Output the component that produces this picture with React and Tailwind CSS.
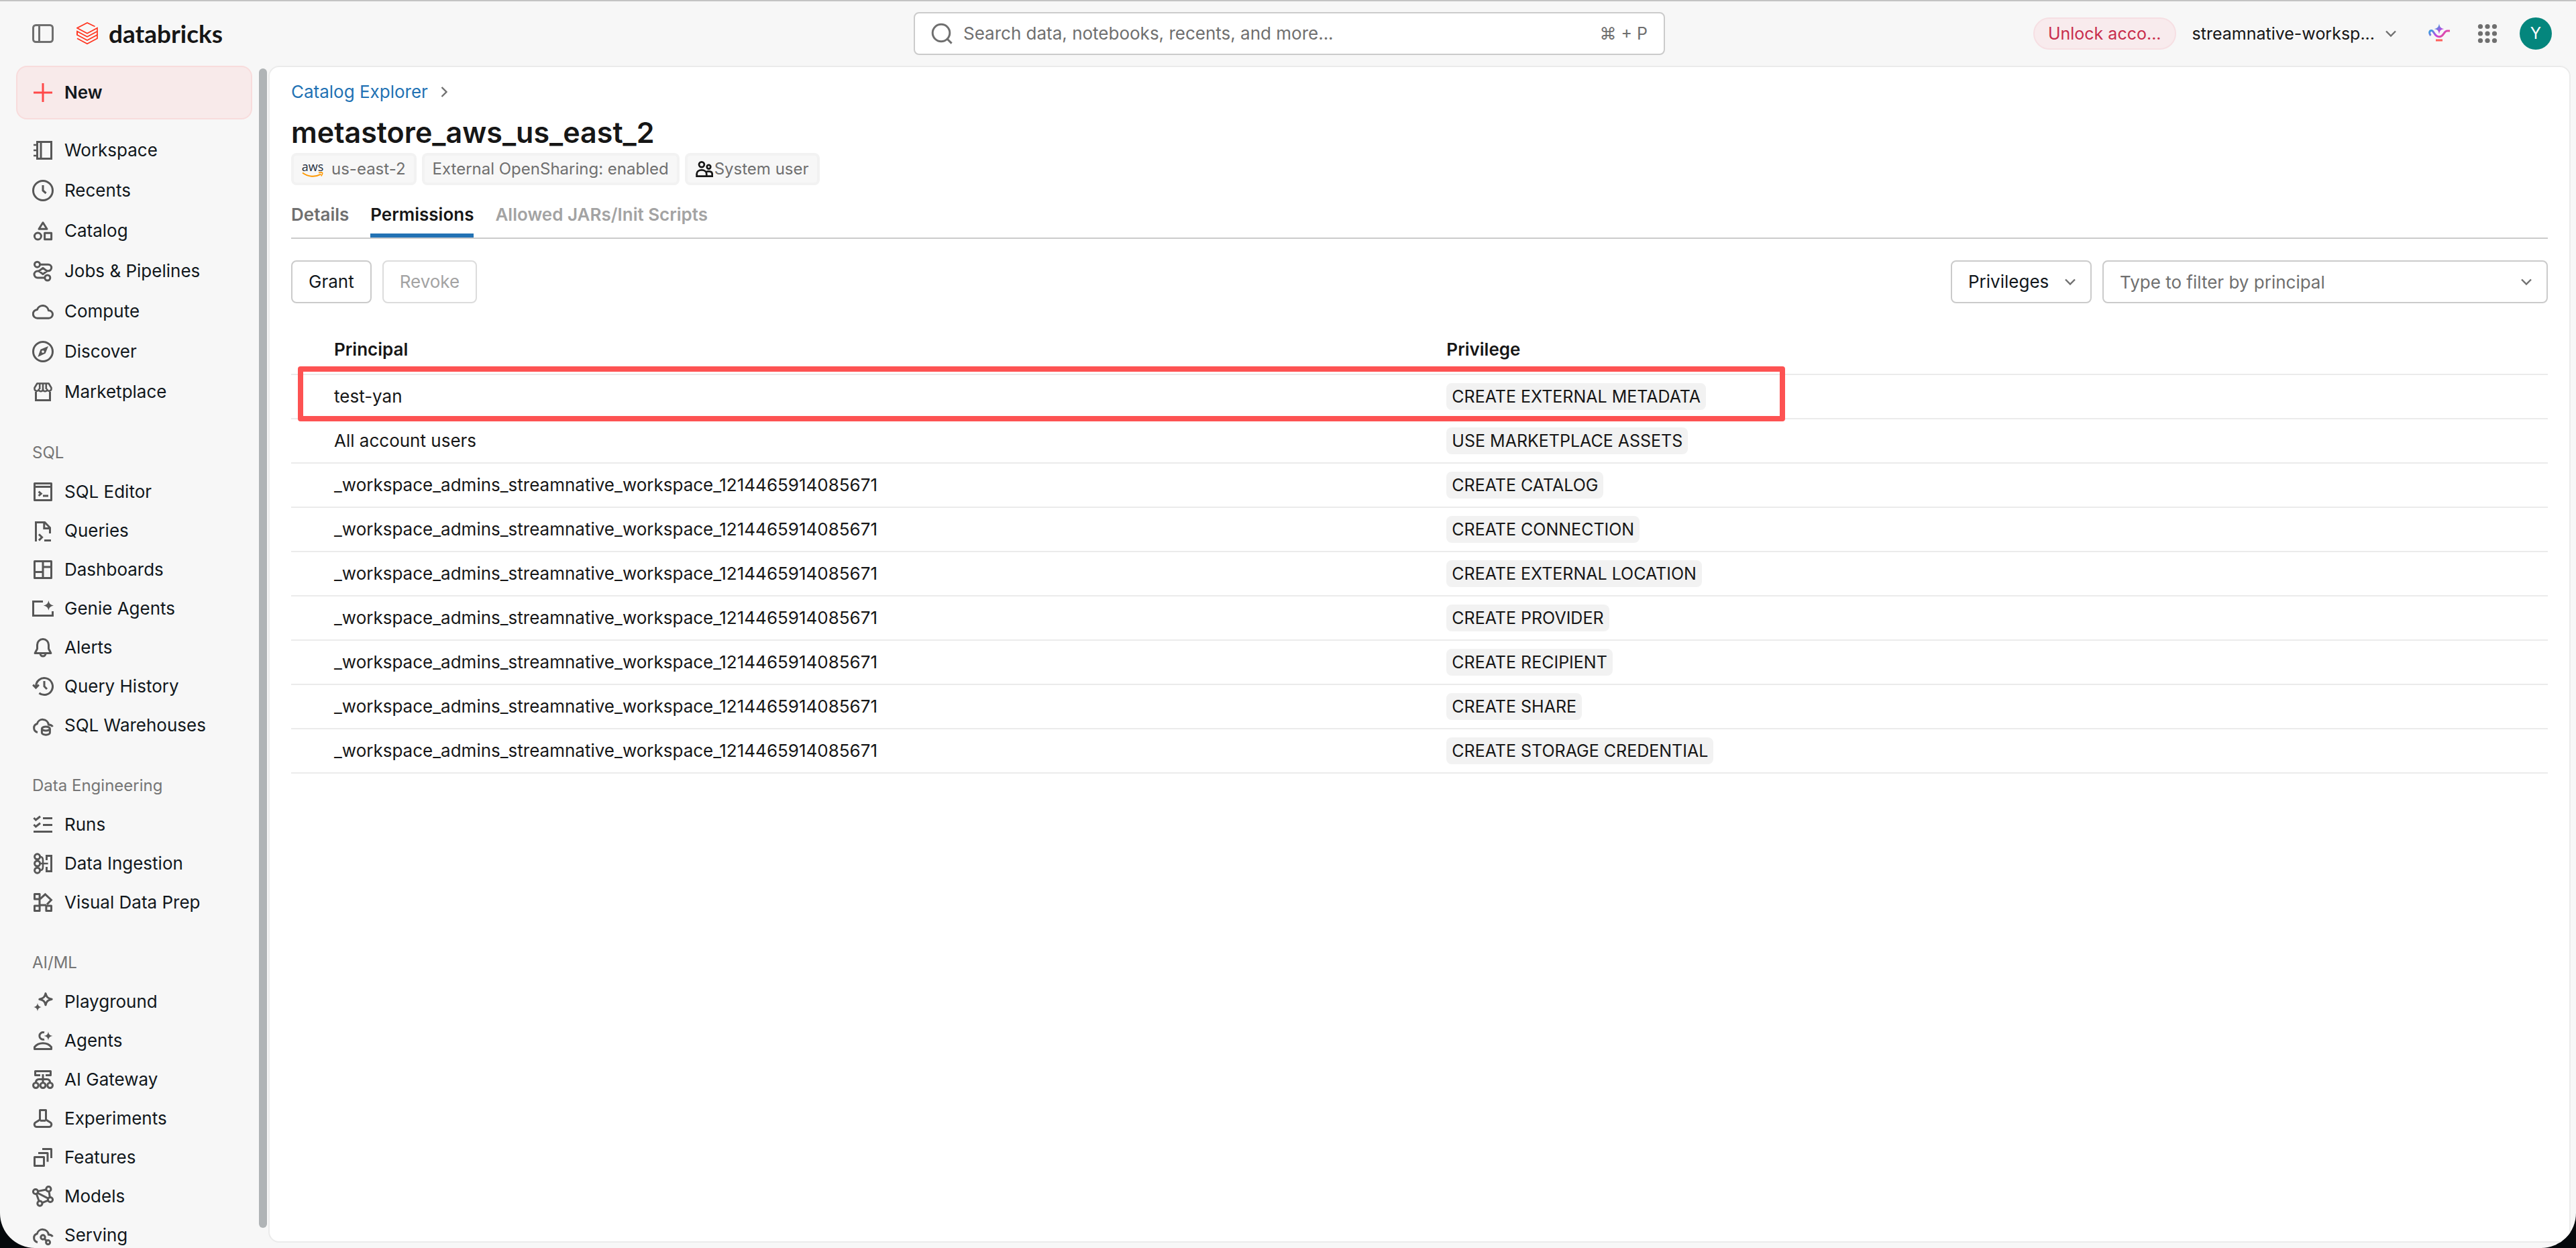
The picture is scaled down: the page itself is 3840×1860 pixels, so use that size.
const Icon = ({ children, className = "size-8 text-[#575757]" }) => (
    <svg viewBox="0 0 16 16" fill="none" stroke="currentColor" strokeWidth="1.5" className={`shrink-0 ${className}`} aria-hidden="true">
        {children}
    </svg>
)

const icons = {
    workspace: (
        <>
            <path d="M3.75 1.75h10.5v12.5H3.75zM6.5 1.75v12.5" />
            <path d="M1 4h2.5M1 8h2.5M1 12h2.5" strokeWidth="1.3" />
        </>
    ),
    recents: (
        <>
            <circle cx="8" cy="8" r="7.25" />
            <path d="M8 4v4l2.3 2" />
        </>
    ),
    catalog: (
        <>
            <path d="M8 1.9 11 6.6H5z" strokeLinejoin="round" />
            <circle cx="4.2" cy="12" r="2.5" />
            <path d="M9.3 9.6h5v4.8h-5z" strokeLinejoin="round" />
        </>
    ),
    jobs: (
        <>
            <circle cx="3.75" cy="3.1" r="2" />
            <circle cx="11.4" cy="13" r="2" />
            <path d="M5.75 3.1h6.2a2.35 2.35 0 0 1 0 4.8H11M9.4 13H4a2.4 2.4 0 0 1 0-5h1" />
            <path d="m5 8 3-2.3L11 8l-3 2.3z" strokeLinejoin="round" />
        </>
    ),
    compute: <path d="M3.9 13.1a3.15 3.15 0 0 1-.2-6.3 4.4 4.4 0 0 1 8.5.6h.2a2.85 2.85 0 0 1 0 5.7z" strokeLinejoin="round" />,
    discover: (
        <>
            <circle cx="8" cy="8" r="7.25" />
            <path d="M12 4 9.8 9.4 4.2 12l2-5.6zM8 7.1a.95.95 0 1 0 0 1.9.95.95 0 0 0 0-1.9z" fill="currentColor" fillRule="evenodd" stroke="none" />
        </>
    ),
    marketplace: (
        <>
            <path d="M2.75 8v6.25h10.5V8" />
            <path d="M3.7 1.75h8.6L14.25 5v.7a1.6 1.6 0 0 1-3.1.6 1.6 1.6 0 0 1-3.15 0 1.6 1.6 0 0 1-3.15 0 1.6 1.6 0 0 1-3.1-.6V5zM5.6 2v4M8 2v4M10.4 2v4" strokeLinejoin="round" strokeWidth="1.3" />
        </>
    ),
    sqlEditor: (
        <>
            <path d="M1.75 1.75h12.5v12.5H1.75zM1.75 4.3h12.5" strokeLinejoin="round" />
            <path d="m4.8 7.8 1.8 1.6L4.8 11M8 11h4" />
        </>
    ),
    queries: (
        <>
            <path d="M2.75 16V1.75h6.6l3.9 4V10M8.9 2v4.2H13" />
            <path d="m5 10.6 2.3 2.3L5 15.2M9 15.25h5" />
        </>
    ),
    dashboards: <path d="M1.75 1.75h12.5v12.5H1.75zM8 2v12M2 9.75h6M8 6h6" strokeLinejoin="round" />,
    genie: (
        <>
            <path d="M8 2.75H.75v10.5h14.5V10" />
            <path d="M12.2 2c.5 2.3 1.3 3.1 3.8 3.7-2.5.6-3.3 1.4-3.8 3.7-.5-2.3-1.3-3.1-3.8-3.7 2.5-.6 3.3-1.4 3.8-3.7z" fill="currentColor" stroke="none" />
        </>
    ),
    alerts: (
        <>
            <path d="M3.75 6a4.25 4.25 0 0 1 8.5 0v3l1.7 3.25H2.05L3.75 9z" strokeLinejoin="round" />
            <path d="M6 12.5a2 2 0 0 0 4 0" />
        </>
    ),
    history: (
        <>
            <path d="M2.75 8A6.25 6.25 0 1 1 5.2 13" />
            <path d="m.6 6.8 2.15 2.2L4.9 6.8M9 4v4l2 2" />
        </>
    ),
    warehouses: (
        <>
            <path d="M4 13.2a3.25 3.25 0 0 1-.4-6.3 4.4 4.4 0 0 1 8.6.6c1.3.1 2.4.5 3.1 1.5" />
            <ellipse cx="10.2" cy="10.5" rx="3" ry="1.5" />
            <path d="M7.2 10.5v3c0 .9 1.3 1.6 3 1.6s3-.7 3-1.6v-3" />
        </>
    ),
    runs: <path d="m1.2 3 1.5 1.5L6 1.9M1.2 8l1.5 1.5L6 6.9M8 3.25h7M8 8.25h7M1 13.25h14" />,
    ingestion: (
        <>
            <circle cx="3.8" cy="2.9" r="2" />
            <circle cx="3.8" cy="8" r="2" />
            <circle cx="3.8" cy="13.1" r="2" />
            <path d="M5.8 2.9C7.5 2.9 8 3.9 8 5.5v5c0 1.6-.5 2.6-2.2 2.6M5.8 8h6" strokeWidth="1.3" />
            <path d="M10.75 5.5V2.25h3.5v11.5h-3.5V10.5" />
        </>
    ),
    visualPrep: (
        <>
            <path d="M1.75 1.75h3.8v3.8h-3.8zM1.75 10.45h3.8v3.8h-3.8zM10.45 10.45h3.8v3.8h-3.8z" strokeLinejoin="round" />
            <path d="M5.5 10V5.5M5.5 10h5M6 5.3l3.7-3.4 4.5 4.2L11 9.5" />
        </>
    ),
    playground: (
        <>
            <path d="M10 1.8c.6 2.7 1.7 3.7 4.6 4.3-2.9.6-4 1.6-4.6 4.3-.6-2.7-1.7-3.7-4.6-4.3 2.9-.6 4-1.6 4.6-4.3z" strokeLinejoin="round" />
            <path d="M4 9c.4 1.9 1 2.6 3 3-2 .4-2.6 1.1-3 3-.4-1.9-1-2.6-3-3 2-.4 2.6-1.1 3-3z" fill="currentColor" stroke="none" />
        </>
    ),
    agents: (
        <>
            <path d="M9 1.9A2.7 2.7 0 1 0 9 7" />
            <path d="M12 1.3c.4 2.1 1.1 2.8 3.2 3.2-2.1.4-2.8 1.1-3.2 3.2-.4-2.1-1.1-2.8-3.2-3.2 2.1-.4 2.8-1.1 3.2-3.2z" fill="currentColor" stroke="none" />
            <path d="M1.75 14.25v-1.5C3.25 10.850 5.450 9.850 8 9.850s4.750 1 6.250 2.900v1.500z" strokeLinejoin="round" />
        </>
    ),
    gateway: (
        <>
            <path d="M6 4.75H2.25v-3h11.5v3H10" strokeLinejoin="round" />
            <path d="M8 4v6M2.75 10.3C2.75 8.5 3.5 7.75 5 7.75h6c1.5 0 2.25.75 2.25 2.55" />
            <circle cx="2.7" cy="12.3" r="1.95" />
            <circle cx="8" cy="12.3" r="1.95" />
            <circle cx="13.3" cy="12.3" r="1.95" />
        </>
    ),
    experiments: <path d="M5.75 1.75h4.5v7.2l3.2 1.9c1.5.9 1.1 3.4-.9 3.4h-9.1c-2 0-2.4-2.5-.9-3.4l3.2-1.9zM6 9.6h4" strokeLinejoin="round" />,
    features: <path d="M1.75 7.75h7v6.5h-7zM4.5 4.75h7v6.5M7.5 1.75h6.75V8.5" strokeLinejoin="round" />,
    models: (
        <>
            <circle cx="2.5" cy="4.5" r="1.8" />
            <circle cx="12.2" cy="2.6" r="1.8" />
            <circle cx="13.5" cy="10.5" r="1.8" />
            <circle cx="5.7" cy="13.3" r="1.8" />
            <path d="m4.3 4.2 6.1-1.2M12.5 4.4l.7 4.3M4 5.5l7.9 4.1M3.2 6.2l1.9 5.4M7.4 12.8l4.4-1.7" />
        </>
    ),
    serving: (
        <>
            <path d="M4 13.2a3.25 3.25 0 0 1-.4-6.3 4.4 4.4 0 0 1 8.6.6c1.3.1 2.4.5 3.1 1.5" />
            <circle cx="8" cy="9.5" r="1.6" />
            <circle cx="11.8" cy="13.3" r="1.5" />
            <path d="m9.2 10.7 1.5 1.5" />
        </>
    ),
}

const primaryItems = [
    ["Workspace", "workspace"],
    ["Recents", "recents"],
    ["Catalog", "catalog"],
    ["Jobs & Pipelines", "jobs"],
    ["Compute", "compute"],
    ["Discover", "discover"],
    ["Marketplace", "marketplace"],
]

const sections = [
    {
        title: "SQL",
        items: [
            ["SQL Editor", "sqlEditor"],
            ["Queries", "queries"],
            ["Dashboards", "dashboards"],
            ["Genie Agents", "genie"],
            ["Alerts", "alerts"],
            ["Query History", "history"],
            ["SQL Warehouses", "warehouses"],
        ],
    },
    {
        title: "Data Engineering",
        items: [
            ["Runs", "runs"],
            ["Data Ingestion", "ingestion"],
            ["Visual Data Prep", "visualPrep"],
        ],
    },
    {
        title: "AI/ML",
        items: [
            ["Playground", "playground"],
            ["Agents", "agents"],
            ["AI Gateway", "gateway"],
            ["Experiments", "experiments"],
            ["Features", "features"],
            ["Models", "models"],
            ["Serving", "serving"],
        ],
    },
]

const ADMINS = "_workspace_admins_streamnative_workspace_1214465914085671"

const grants = [
    ["test-yan", "CREATE EXTERNAL METADATA"],
    ["All account users", "USE MARKETPLACE ASSETS"],
    [ADMINS, "CREATE CATALOG"],
    [ADMINS, "CREATE CONNECTION"],
    [ADMINS, "CREATE EXTERNAL LOCATION"],
    [ADMINS, "CREATE PROVIDER"],
    [ADMINS, "CREATE RECIPIENT"],
    [ADMINS, "CREATE SHARE"],
    [ADMINS, "CREATE STORAGE CREDENTIAL"],
]

const ChevronDown = ({ className = "" }) => (
    <svg viewBox="0 0 16 16" fill="none" stroke="currentColor" strokeWidth="2.4" className={`size-4 shrink-0 text-[#6f6f6f] ${className}`} aria-hidden="true">
        <path d="M1 4.500 8 11.500l7-7" />
    </svg>
)

const Logo = () => (
    <a href="#" className="flex items-center gap-4 text-[#161616]">
        <svg viewBox="0 0 32 34" fill="none" stroke="#ff3621" strokeWidth="1.7" className="h-[34px] w-8" aria-hidden="true">
            <path d="M27.5 6.5 16 1 1 8.7l15 8 15-8v5l-15 8-15-8v5.3l15 8 15-8v5.3l-15 8-15-8" />
            <path d="M1 14v5.5M31 14v5" />
        </svg>
        <span className="font-[Lato] text-[37px] leading-9 font-bold">databricks</span>
    </a>
)

const GenieIcon = () => (
    <svg viewBox="0 0 16 16" fill="none" className="size-8" aria-hidden="true">
        <defs>
            <linearGradient id="genie" x1="1" y1="2" x2="13" y2="15" gradientUnits="userSpaceOnUse">
                <stop offset="0.2" stopColor="#4299e0" />
                <stop offset="0.5" stopColor="#ca42e0" />
                <stop offset="1" stopColor="#ff5f46" />
            </linearGradient>
        </defs>
        <path d="M8 .6c.5 2.600 1.200 3.400 3.700 3.900C9.200 5 8.500 5.800 8 8.400 7.500 5.800 6.800 5 4.300 4.500 6.800 4 7.500 3.200 8 .6z" fill="url(#genie)" />
        <path d="M1.700 9.500C.2 7.500.8 5.800 2.300 5.800c2 0 1.900 4.600 5.700 4.600 3.700 0 3.300-4.400 6-4.400h2" stroke="url(#genie)" strokeWidth="1.5" />
        <path d="M5.500 13h5" stroke="#ff5f5a" strokeWidth="1.5" />
    </svg>
)

const Header = () => (
    <header className="flex h-24 shrink-0 items-center gap-8 pr-9 pl-10">
        <div className="flex flex-1 items-center gap-[34px]">
            <button aria-label="Toggle sidebar" className="ml-2">
                <Icon className="size-8 text-[#6f6f6f]">
                    <rect x="0.75" y="1.75" width="14.5" height="12.5" rx="2" />
                    <path d="M5.25 2v12" />
                </Icon>
            </button>
            <Logo />
        </div>

        <label className="flex h-16 w-full max-w-[1120px] items-center gap-4 rounded-lg border-2 border-[#cbcbcb] bg-white px-6 text-[#6f6f6f]">
            <svg viewBox="0 0 16 16" fill="none" stroke="currentColor" strokeWidth="1.5" className="size-8 shrink-0" aria-hidden="true">
                <circle cx="7.5" cy="7.5" r="6.4" />
                <path d="m12 12 3.3 3.3" />
            </svg>
            <input
                type="search"
                aria-label="Search"
                placeholder="Search data, notebooks, recents, and more..."
                className="min-w-0 flex-1 bg-transparent placeholder:text-[#6f6f6f] outline-none"
            />
            <span className="text-[25px]">⌘ + P</span>
        </label>

        <div className="flex flex-1 items-center justify-end text-[25px]">
            <button className="h-12 rounded-full border-2 border-[#f6dfe3] bg-[#f8ebed] px-5 text-[#c82d4c]">Unlock acco...</button>
            <button className="ml-6 flex items-center gap-4 text-[#161616]">
                streamnative-worksp...
                <ChevronDown />
            </button>
            <button aria-label="Genie" className="ml-12">
                <GenieIcon />
            </button>
            <button aria-label="Apps" className="ml-10">
                <svg viewBox="0 0 32 32" className="size-8 fill-[#6f6f6f]" aria-hidden="true">
                    {[5.5, 16, 26.5].map((cy) => [5.5, 16, 26.5].map((cx) => <circle key={`${cx}-${cy}`} cx={cx} cy={cy} r="3.6" />))}
                </svg>
            </button>
            <button className="ml-8 size-12 rounded-full bg-[#04867d] text-2xl text-white">Y</button>
        </div>
    </header>
)

const NavItem = ({ label, icon, className }) => (
    <li>
        <a href="#" className={`flex items-center gap-4 px-6 text-[#11171c] ${className}`}>
            <Icon>{icons[icon]}</Icon>
            {label}
        </a>
    </li>
)

const Sidebar = () => (
    <aside className="flex w-[400px] shrink-0 overflow-hidden">
        <nav className="flex-1 pr-[10px] pl-6">
            <button className="flex h-20 w-full items-center gap-4 rounded-2xl border-2 border-[#f8dcdc] bg-[#f8eaea] px-[22px] font-semibold text-[#11171c]">
                <Icon className="size-8 text-[#ff4949]">
                    <path d="M8 1v14M1 8h14" />
                </Icon>
                New
            </button>
            <ul className="pt-4">
                {primaryItems.map(([label, icon]) => (
                    <NavItem key={label} label={label} icon={icon} className="h-[60px]" />
                ))}
            </ul>
            {sections.map((section) => (
                <section key={section.title} className="pt-8">
                    <h2 className="px-6 text-2xl leading-[58px] text-[#757575]">{section.title}</h2>
                    <ul>
                        {section.items.map(([label, icon]) => (
                            <NavItem key={label} label={label} icon={icon} className="h-[58px]" />
                        ))}
                    </ul>
                </section>
            ))}
        </nav>
        {/* scrollbar thumb */}
        <div className="mt-1 mr-[2px] mb-[30px] w-3 rounded-full bg-[#b0b4b6]" />
    </aside>
)

const Tag = ({ children }) => (
    <li className="flex h-12 items-center rounded-lg border-4 border-[#f2f2f2] bg-[#f7f7f7] px-3 text-2xl text-[#6f6f6f]">{children}</li>
)

const AwsMark = () => (
    <span className="mr-3 flex w-8 flex-col items-center font-[Open_Sans] text-lg leading-4 font-medium text-[#252f3e]">
        aws
        <svg viewBox="0 0 32 9" fill="none" stroke="#ff9900" strokeWidth="2" className="h-[9px] w-8" aria-hidden="true">
            <path d="M1 1.5c8 6 18.5 7 27.5 2.2" />
            <path d="M25 1.5c3-.8 5-.6 5.5 0s-.2 2.8-1.7 5" strokeWidth="1.6" />
        </svg>
    </span>
)

const Toolbar = () => (
    <div className="mt-8 flex items-center gap-4">
        <button className="h-16 rounded-lg border-2 border-[#cbcbcb] px-6 text-[#11171c]">Grant</button>
        <button disabled className="h-16 rounded-lg border-2 border-[#dcdcdc] px-6 text-[#a3a3a3]">
            Revoke
        </button>
        <div className="relative ml-auto">
            <select aria-label="Privileges" className="h-16 w-[210px] appearance-none rounded-lg border-2 border-[#cbcbcb] pl-6 text-[#11171c]">
                <option>Privileges</option>
            </select>
            <ChevronDown className="pointer-events-none absolute top-6 right-6" />
        </div>
        <div className="relative">
            <input
                role="combobox"
                aria-expanded="false"
                aria-label="Filter by principal"
                placeholder="Type to filter by principal"
                className="h-16 w-[664px] rounded-lg border-2 border-[#cbcbcb] pr-14 pl-6 placeholder:text-[#6f6f6f]"
            />
            <ChevronDown className="pointer-events-none absolute top-6 right-6" />
        </div>
    </div>
)

const GrantsTable = () => (
    <div className="relative mt-8">
        <table className="w-full table-fixed text-left text-[#161616]">
            <thead>
                <tr className="h-[74px] border-b-2 border-[#ebebeb]">
                    <th className="w-[51.2%] pl-16 font-semibold">Principal</th>
                    <th className="font-semibold">Privilege</th>
                </tr>
            </thead>
            <tbody>
                {grants.map(([principal, privilege]) => (
                    <tr key={privilege} className="h-[66px] border-b-2 border-[#ebebeb]">
                        <td className="pl-16">{principal}</td>
                        <td>
                            <span className="inline-block rounded-lg bg-[#f2f2f2] px-2 align-middle text-[25px] leading-10">{privilege}</span>
                        </td>
                    </tr>
                ))}
            </tbody>
        </table>
        {/* highlight around the first grant */}
        <div className="pointer-events-none absolute top-[62px] left-[10px] h-[82px] w-[65.9%] rounded border-8 border-[#fd5252]" />
    </div>
)

const App = () => {
    return (
        <div className="bg-[#05090c]">
            <div className="flex h-screen flex-col overflow-hidden rounded-b-[52px] border-t-2 border-[#c4c4c4] bg-[#f7f7f7] font-[Inter,sans-serif] text-[26px] leading-8">
                <Header />
                <div className="flex min-h-0 flex-1">
                    <Sidebar />
                    <main className="mr-2 mb-2 min-w-0 flex-1 rounded-2xl border-2 border-[#ebebeb] bg-white px-8 pt-[21px]">
                        <nav aria-label="Breadcrumb" className="flex items-center gap-4">
                            <a href="#" className="text-[#2272b4]">
                                Catalog Explorer
                            </a>
                            <ChevronDown className="-rotate-90" />
                        </nav>
                        <h1 className="mt-4 text-[43px] leading-[56px] font-semibold text-[#161616]">metastore_aws_us_east_2</h1>
                        <ul className="mt-[3px] flex gap-2">
                            <Tag>
                                <AwsMark />
                                us-east-2
                            </Tag>
                            <Tag>External OpenSharing: enabled</Tag>
                            <Tag>
                                <svg viewBox="0 0 16 16" fill="none" stroke="#161616" strokeWidth="1.7" className="mr-[2px] size-[26px]" aria-hidden="true">
                                    <circle cx="5.5" cy="3.8" r="2.4" />
                                    <circle cx="12" cy="6" r="1.7" />
                                    <path d="M1 14.5v-2c0-2.2 2-3.7 4.5-3.7s4.5 1.5 4.5 3.7v2zM10 14.5h5.2v-1.8c0-1.6-1.2-2.6-3.2-2.6-1 0-1.800.3-2.400.7" />
                                </svg>
                                System user
                            </Tag>
                        </ul>
                        <div role="tablist" className="mt-7 flex gap-8 border-b-2 border-[#cbcbcb] font-semibold">
                            <button role="tab" className="border-b-[6px] border-transparent pb-3 text-[#6f6f6f]">
                                Details
                            </button>
                            <button role="tab" aria-selected="true" className="border-b-[6px] border-[#2272b4] pb-3 text-[#161616]">
                                Permissions
                            </button>
                            <button role="tab" disabled className="border-b-[6px] border-transparent pb-3 text-[#a3a3a3]">
                                Allowed JARs/Init Scripts
                            </button>
                        </div>
                        <Toolbar />
                        <GrantsTable />
                    </main>
                </div>
            </div>
        </div>
    )
}

export default App
